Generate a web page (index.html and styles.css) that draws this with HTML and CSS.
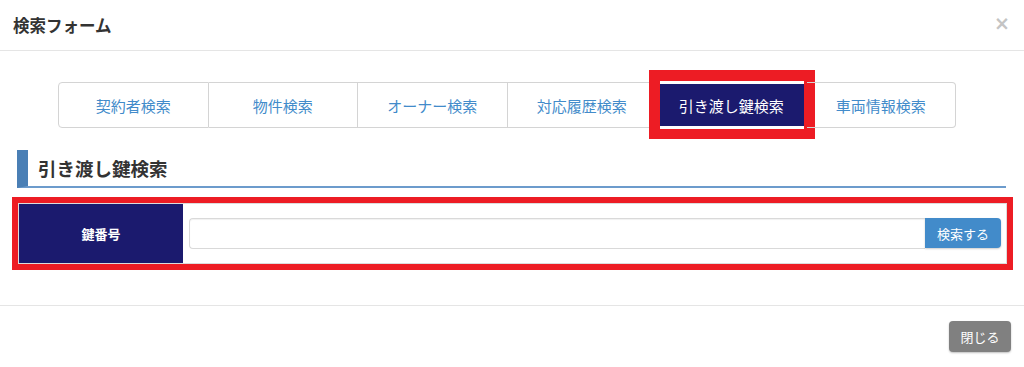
FILE: index.html
```html
<!DOCTYPE html>
<html>

	<head>
		<meta charset="UTF-8">
		<title>検索フォーム</title>
		<link rel="stylesheet" href="styles.css">
	</head>

	<body>
		<div class="modal">
			<!-- ヘッダー -->
			<div class="modal-header">
				<h4 class="modal-title">検索フォーム</h4>
				<a href="javascript:;" class="close">&times;</a>
			</div>
			<!-- 本体 -->
			<div class="modal-body">
				<ul class="tabs">
					<li><a href="#">契約者検索</a></li>
					<li><a href="#">物件検索</a></li>
					<li><a href="#">オーナー検索</a></li>
					<li><a href="#">対応履歴検索</a></li>
					<li class="active"><a href="#">引き渡し鍵検索</a></li>
					<li><a href="#">車両情報検索</a></li>
				</ul>
				<h3 class="section-title">引き渡し鍵検索</h3>
				<div class="mark">
					<div class="search-row">
						<div class="search-label">鍵番号</div>
						<div class="search-field">
							<input type="text" class="form-input">
							<a href="javascript:;" class="btn-search">検索する</a>
						</div>
					</div>
				</div>
			</div>
			<!-- フッター -->
			<div class="modal-footer">
				<a href="javascript:;" class="btn-close">閉じる</a>
			</div>
		</div>
	</body>

</html>
```

FILE: styles.css
```css
* {
	margin: 0;
	padding: 0;
	box-sizing: border-box;
}

body {
	font-family: "Noto Sans CJK JP", "Liberation Sans", sans-serif;
	color: #333;
	background: #fff;
}

ul {
	list-style: none;
}

a {
	cursor: pointer;
	outline: none;
	text-decoration: none;
}

.modal-header {
	height: 51px;
	padding: 0 14px 0 13px;
	display: flex;
	align-items: center;
	justify-content: space-between;
	border-bottom: 1px solid #e5e5e5;
}

.modal-title {
	font-size: 16.5px;
	font-weight: bold;
	color: #333;
}

.close {
	font-family: "DejaVu Sans", sans-serif;
	font-size: 19px;
	font-weight: bold;
	color: #c4c4c4;
	line-height: 1;
	margin-top: -3px;
}

.modal-body {
	padding: 31px 18px 35px 17px;
}

.tabs {
	display: flex;
	margin: 0 50px 0 41px;
}

.tabs li {
	flex: 1;
	height: 46px;
	border: 1px solid #d4d4d4;
	border-left: none;
	position: relative;
}

.tabs li:first-child {
	border-left: 1px solid #d4d4d4;
	border-radius: 4px 0 0 4px;
}

.tabs li:last-child {
	border-radius: 0 4px 4px 0;
}

.tabs li a {
	display: flex;
	height: 100%;
	align-items: center;
	justify-content: center;
	font-size: 15px;
	color: #428bca;
}

.tabs li.active {
	background: #1b1a6e;
	border-top: 2px solid #fff;
	border-bottom: 2px solid #fff;
}

.tabs li.active a {
	color: #fff;
}

/* 注釈の赤枠 */
.tabs li.active::after {
	content: "";
	position: absolute;
	left: -8px;
	right: -9px;
	top: -14px;
	bottom: -13px;
	border: 11px solid #ed1c24;
	border-bottom-width: 10px;
}

.section-title {
	margin-top: 22px;
	height: 38px;
	padding-left: 10px;
	border-left: 11px solid #4a7fb5;
	border-bottom: 2px solid #6c9bcc;
	font-size: 18.5px;
	font-weight: bold;
	line-height: 36px;
	color: #333;
}

.mark {
	margin: 9px -7px 0 -5px;
	border: 6px solid #ed1c24;
}

.search-row {
	display: flex;
	border: 1px solid #dcdcdc;
}

.search-label {
	width: 164px;
	background: #1b1a6e;
	color: #fff;
	font-size: 13px;
	font-weight: bold;
	display: flex;
	align-items: center;
	justify-content: center;
}

.search-field {
	flex: 1;
	display: flex;
	padding: 14px 5px 14px 6px;
}

.form-input {
	flex: 1;
	height: 31px;
	border: 1px solid #d9d9d9;
	border-right: none;
	border-radius: 4px 0 0 4px;
	box-shadow: inset 0 1px 1px rgba(0, 0, 0, 0.06);
}

.btn-search {
	width: 76px;
	height: 30px;
	background: #428bca;
	color: #fff;
	font-size: 13px;
	border-radius: 0 4px 4px 0;
	display: flex;
	align-items: center;
	justify-content: center;
	box-shadow: 0 1px 2px rgba(0, 0, 0, 0.2);
}

.modal-footer {
	border-top: 1px solid #e5e5e5;
	padding: 15px 13px 15px 0;
	display: flex;
	justify-content: flex-end;
}

.btn-close {
	width: 62px;
	height: 31px;
	background: #808080;
	color: #fff;
	font-size: 13px;
	border-radius: 4px;
	display: flex;
	align-items: center;
	justify-content: center;
	box-shadow: 0 1px 2px rgba(0, 0, 0, 0.25);
}
```
